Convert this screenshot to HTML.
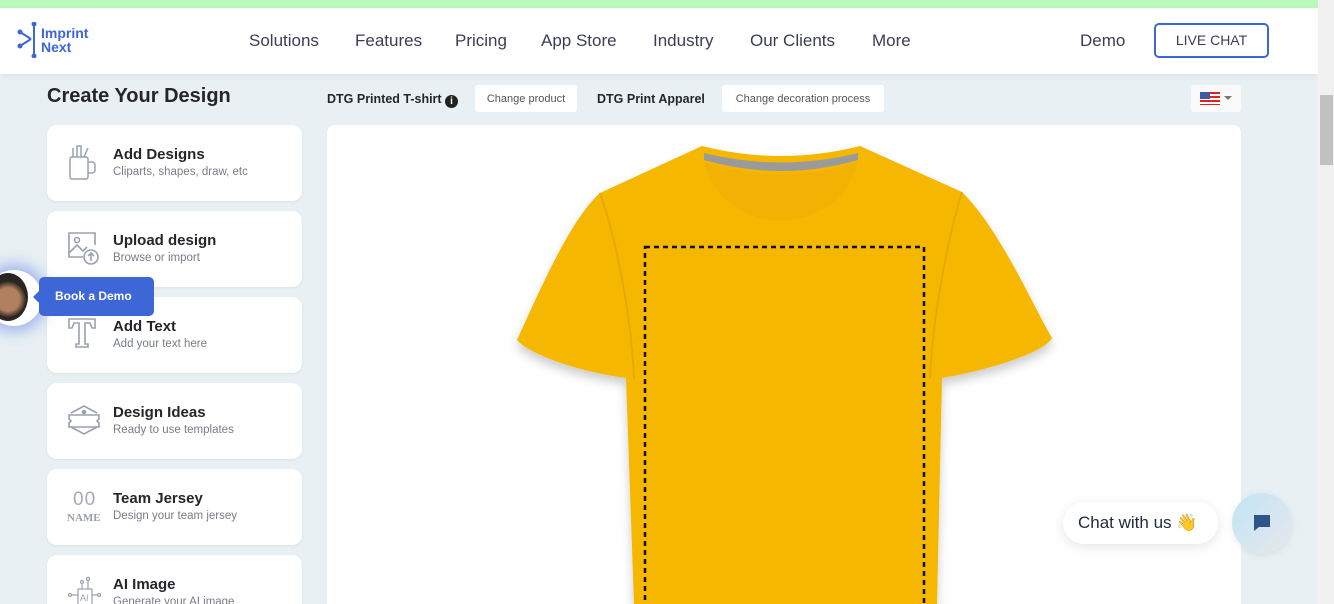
<!DOCTYPE html>
<html><head><meta charset="utf-8"><style>
*{box-sizing:border-box;margin:0;padding:0}
html,body{width:1334px;height:604px;overflow:hidden}
body{font-family:"Liberation Sans",sans-serif;background:#e8f0f3;position:relative}
.top{position:absolute;left:0;top:0;width:1318px;height:8px;background:#b9fbba}
.hdr{position:absolute;left:0;top:8px;width:1318px;height:66px;background:#fff;box-shadow:0 2px 6px rgba(0,0,0,.06)}
.nav{position:absolute;top:31px;font-size:17px;color:#3c3c55}
.live{position:absolute;left:1154px;top:23px;width:115px;height:35px;border:2px solid #3d66d6;border-radius:5px;font-size:14px;color:#3c3c55;text-align:center;line-height:31px}
.sb{position:absolute;left:1318px;top:0;width:16px;height:604px;background:#f1f1f1}
.thumb{position:absolute;left:1320px;top:95px;width:13px;height:70px;background:#c1c1c1}
h1{position:absolute;left:47px;top:85px;font-size:20px;font-weight:bold;color:#25262b}
.card{position:absolute;left:47px;width:255px;height:76px;background:#fff;border-radius:10px;box-shadow:0 1px 3px rgba(0,0,0,.06)}
.card b{position:absolute;left:66px;top:21px;font-size:15px;color:#25262b}
.card span{position:absolute;left:66px;top:41px;font-size:11.5px;color:#777c86}
.card svg{position:absolute;left:20px;top:20px}
.lbl{position:absolute;top:92px;font-size:12.5px;font-weight:bold;color:#25262b}
.btn{position:absolute;top:85px;height:27px;background:#fff;border-radius:3px;font-size:11px;color:#555;line-height:28px;text-align:center}
.canvas{position:absolute;left:327px;top:125px;width:914px;height:490px;background:#fff;border-radius:8px}
</style></head><body>
<div class="top"></div>
<div class="hdr"></div>
<svg style="position:absolute;left:17px;top:22px" width="24" height="36" viewBox="0 0 24 36"><g stroke="#3d66d6" stroke-width="2" fill="#3d66d6"><line x1="17" y1="2" x2="17" y2="34"/><line x1="3" y1="10" x2="14" y2="17"/><line x1="3" y1="24" x2="14" y2="17"/><circle cx="17" cy="2" r="1.5"/><circle cx="17" cy="34" r="1.5"/><circle cx="3" cy="10" r="1.5"/><circle cx="3" cy="24" r="1.5"/></g></svg>
<div style="position:absolute;left:41px;top:26px;font-size:14px;font-weight:bold;color:#3d66d6;line-height:14px">Imprint<br>Next</div>
<div class="nav" style="left:249px">Solutions</div>
<div class="nav" style="left:355px">Features</div>
<div class="nav" style="left:455px">Pricing</div>
<div class="nav" style="left:541px">App Store</div>
<div class="nav" style="left:653px">Industry</div>
<div class="nav" style="left:750px">Our Clients</div>
<div class="nav" style="left:872px">More</div>
<div class="nav" style="left:1080px">Demo</div>
<div class="live">LIVE CHAT</div>
<div class="sb"></div><div class="thumb"></div>
<h1>Create Your Design</h1>
<div class="lbl" style="left:327px">DTG Printed T-shirt <span style="display:inline-block;width:13px;height:13px;border-radius:50%;background:#222;color:#fff;font-size:10px;text-align:center;line-height:13px;vertical-align:-1px">i</span></div>
<div class="btn" style="left:475px;width:102px">Change product</div>
<div class="lbl" style="left:597px">DTG Print Apparel</div>
<div class="btn" style="left:722px;width:162px">Change decoration process</div>
<div style="position:absolute;left:1191px;top:85px;width:50px;height:27px;background:#fafafa;border-radius:3px"><div style="position:absolute;left:9px;top:7px;width:20px;height:13px;background:repeating-linear-gradient(#d22 0 2px,#fff 2px 4px)"></div><div style="position:absolute;left:9px;top:7px;width:10px;height:7px;background:#3c5aa6"></div><div style="position:absolute;left:33px;top:11px;border:4px solid transparent;border-top-color:#777"></div></div>
<div class="card" style="top:125px"><svg width="32" height="36" viewBox="0 0 32 36" fill="none" stroke="#9aa0ad" stroke-width="1.5"><rect x="3" y="12" width="18" height="22" rx="2"/><path d="M21 17h4a3 3 0 0 1 3 3v5a3 3 0 0 1-3 3h-4"/><path d="M6 12V3M10 12V1h4v11M17 12l4-9"/></svg><b>Add Designs</b><span>Cliparts, shapes, draw, etc</span></div>
<div class="card" style="top:211px"><svg width="34" height="34" viewBox="0 0 34 34" fill="none" stroke="#9aa0ad" stroke-width="1.6"><path d="M16 26H2V2h26v12"/><circle cx="10" cy="9" r="2.5"/><path d="M2 22l8-8 6 6 4-4"/><circle cx="24" cy="26" r="7"/><path d="M24 30v-8M21 25l3-3 3 3"/></svg><b>Upload design</b><span>Browse or import</span></div>
<div class="card" style="top:297px"><svg width="30" height="32" viewBox="0 0 30 32" fill="none" stroke="#9aa0ad" stroke-width="1.6"><path d="M2 2h26v9h-3l-2-5h-5v21h3v3H9v-3h3V6H7l-2 5H2z"/></svg><b>Add Text</b><span>Add your text here</span></div>
<div class="card" style="top:383px"><svg width="34" height="34" viewBox="0 0 34 34" fill="none" stroke="#9aa0ad" stroke-width="1.6"><path d="M4 10L17 3l13 7M4 24l13 7 13-7"/><path d="M2 12h30v4l-2 2 2 2v4H2v-4l2-2-2-2z"/><circle cx="17" cy="9" r="1.5" fill="#9aa0ad"/></svg><b>Design Ideas</b><span>Ready to use templates</span></div>
<div class="card" style="top:469px"><div style="position:absolute;left:26px;top:20px;font-size:19px;color:#a5aab5;letter-spacing:1px">00</div><div style="position:absolute;left:20px;top:43px;font-family:'Liberation Serif',serif;font-weight:bold;font-size:11px;color:#9aa0ad">NAME</div><b>Team Jersey</b><span>Design your team jersey</span></div>
<div class="card" style="top:555px"><svg width="36" height="32" viewBox="0 0 36 32" fill="none" stroke="#9aa0ad" stroke-width="1.2"><rect x="11" y="14" width="14" height="16"/><text x="13" y="26" font-size="9" fill="#9aa0ad" stroke="none" font-family="Liberation Sans">AI</text><path d="M15 14V8M21 14V5M11 20H4M25 20h6"/><circle cx="15" cy="7" r="1.5"/><circle cx="21" cy="4" r="1.5"/><circle cx="3" cy="20" r="1.5"/><circle cx="32" cy="20" r="1.5"/></svg><b>AI Image</b><span>Generate your AI image</span></div>
<div class="canvas"></div>
<svg style="position:absolute;left:500px;top:130px" width="570" height="474" viewBox="500 130 570 474">
<defs><filter id="s"><feDropShadow dx="0" dy="6" stdDeviation="5" flood-opacity=".2"/></filter></defs>
<path filter="url(#s)" d="M702 146 Q781 166 860 146 L962 192 C1000 230 1030 300 1052 338 C1045 352 990 370 942 378 L937 604 L634 604 L626 378 C580 372 530 355 517 340 C540 290 570 220 600 193 Z" fill="#f6b705"/>
<path d="M704 153 Q781 172 858 153 L858 160 Q781 182 704 160Z" fill="#9a9a9a"/>
<path d="M704 162 C725 240 837 240 858 162 Q781 186 704 162Z" fill="#f2b103"/>
<path d="M600 193 C620 250 632 330 634 378" stroke="#e9a800" stroke-width="2" fill="none"/>
<path d="M962 192 C944 250 932 330 930 378" stroke="#e9a800" stroke-width="2" fill="none"/>
<rect x="645" y="247" width="279" height="370" fill="none" stroke="#111" stroke-width="2.5" stroke-dasharray="5 4"/>
</svg>
<div style="position:absolute;left:-14px;top:270px;width:56px;height:56px;border-radius:50%;box-shadow:0 0 14px 6px rgba(80,110,230,.45);background:#fff"></div>
<div style="position:absolute;left:-12px;top:273px;width:40px;height:48px;border-radius:50%;background:radial-gradient(circle at 50% 55%,#b08060 0 35%,#2a2520 55%)"></div>
<div style="position:absolute;left:39px;top:277px;width:115px;height:39px;background:#3d66d6;border-radius:5px;color:#fff;font-size:12px;font-weight:bold;line-height:39px;padding-left:16px">Book a Demo</div>
<div style="position:absolute;left:33px;top:291px;border:6px solid transparent;border-right-color:#3d66d6;border-left:0"></div>
<div style="position:absolute;left:1063px;top:502px;width:155px;height:42px;background:#fff;border-radius:21px;box-shadow:0 3px 12px rgba(0,0,0,.1);font-size:17px;color:#222c3a;line-height:42px;padding-left:15px">Chat with us <span style="color:#f5c542">👋</span></div>
<div style="position:absolute;left:1232px;top:493px;width:60px;height:60px;border-radius:50%;background:linear-gradient(135deg,#c2e4f6,#e6e8ec);box-shadow:0 2px 8px rgba(0,0,0,.08)"><svg style="position:absolute;left:20px;top:20px" width="20" height="20" viewBox="0 0 20 20"><path d="M2 2h16v12H7l-5 4z" fill="#2f5488"/></svg></div>
</body></html>
